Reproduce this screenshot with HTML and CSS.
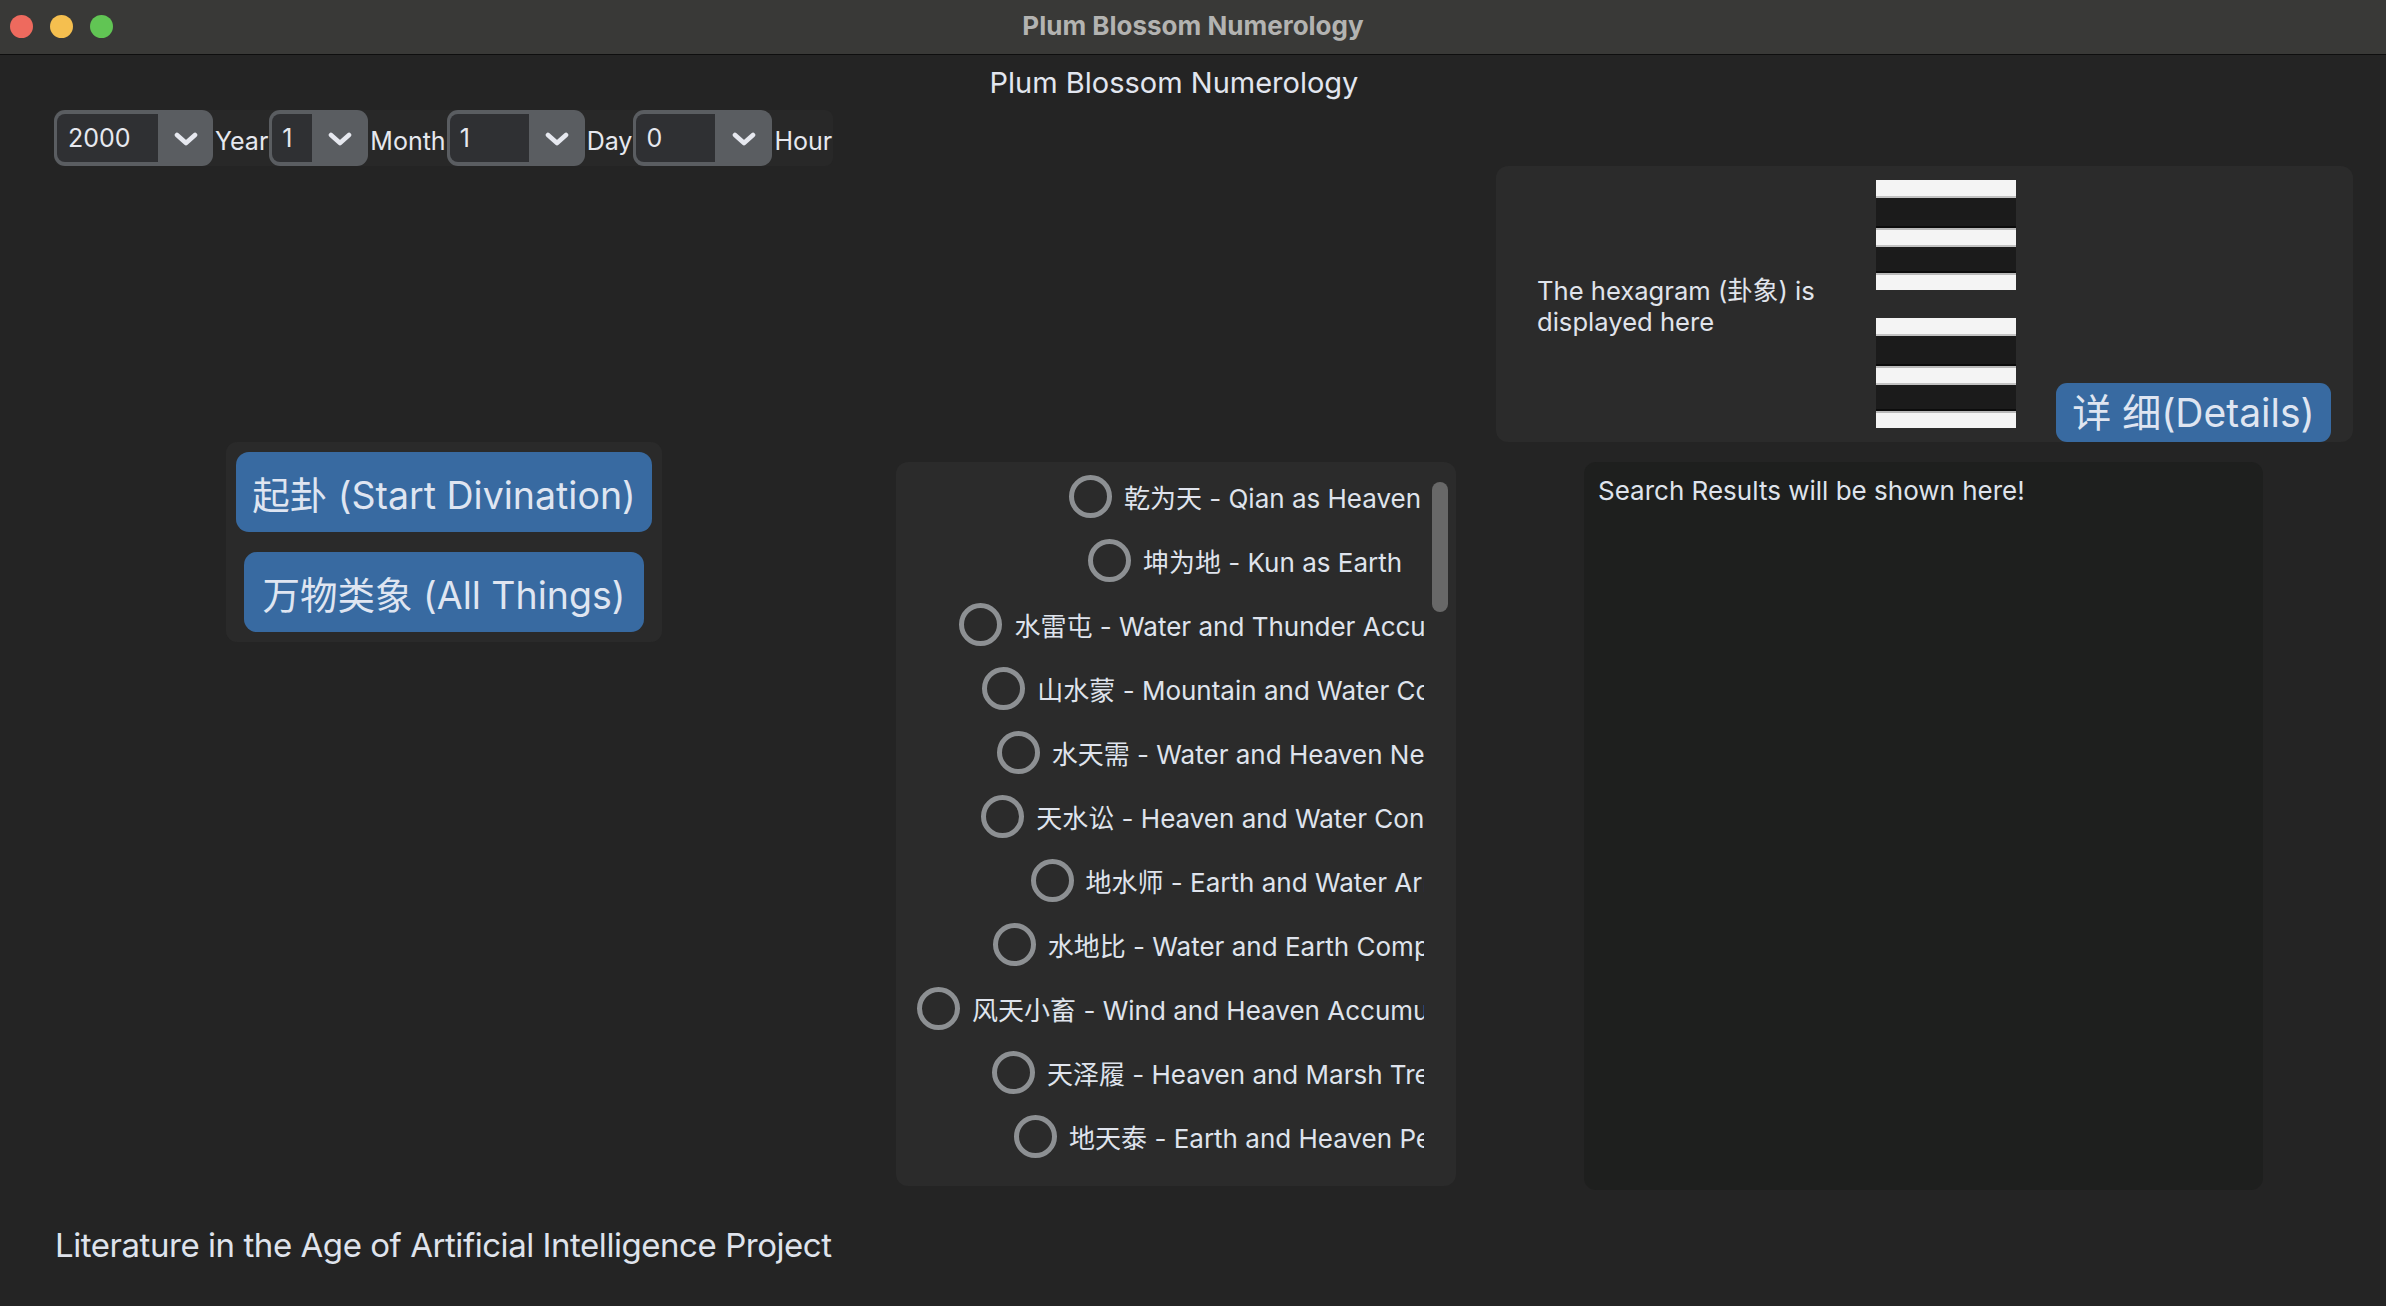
FILE: index.html
```html
<!DOCTYPE html>
<html lang="en">
<head>
<meta charset="utf-8">
<title>Plum Blossom Numerology</title>
<link rel="stylesheet" href="styles.css">
</head>
<body>
<div class="window">
  <div class="titlebar">
    <div class="lights">
      <span class="light red"></span>
      <span class="light yellow"></span>
      <span class="light green"></span>
    </div>
    <div class="wintitle">Plum Blossom Numerology</div>
  </div>
  <div class="app">
    <div class="heading">Plum Blossom Numerology</div>

    <div class="datebar">
      <div class="combo combo-year"><div class="entry">2000</div><div class="arrow"><svg viewBox="0 0 24 14" width="24" height="14"><path d="M3 3 L12 11 L21 3" fill="none" stroke="#e6e8ef" stroke-width="4.6" stroke-linecap="round" stroke-linejoin="round"/></svg></div></div>
      <span class="unit">Year</span>
      <div class="combo combo-month"><div class="entry">1</div><div class="arrow"><svg viewBox="0 0 24 14" width="24" height="14"><path d="M3 3 L12 11 L21 3" fill="none" stroke="#e6e8ef" stroke-width="4.6" stroke-linecap="round" stroke-linejoin="round"/></svg></div></div>
      <span class="unit">Month</span>
      <div class="combo combo-day"><div class="entry">1</div><div class="arrow"><svg viewBox="0 0 24 14" width="24" height="14"><path d="M3 3 L12 11 L21 3" fill="none" stroke="#e6e8ef" stroke-width="4.6" stroke-linecap="round" stroke-linejoin="round"/></svg></div></div>
      <span class="unit">Day</span>
      <div class="combo combo-hour"><div class="entry">0</div><div class="arrow"><svg viewBox="0 0 24 14" width="24" height="14"><path d="M3 3 L12 11 L21 3" fill="none" stroke="#e6e8ef" stroke-width="4.6" stroke-linecap="round" stroke-linejoin="round"/></svg></div></div>
      <span class="unit">Hour</span>
    </div>

    <div class="hexpanel">
      <div class="hextext">The hexagram (卦象) is<br>displayed here</div>
      <div class="hexcol">
        <div class="trigram">
          <div class="yang first"></div><div class="gap"></div>
          <div class="yang"></div><div class="gap short"></div>
          <div class="yang last"></div>
        </div>
        <div class="trigram">
          <div class="yang first"></div><div class="gap"></div>
          <div class="yang"></div><div class="gap short"></div>
          <div class="yang last"></div>
        </div>
      </div>
      <button class="btn details">详 细(Details)</button>
    </div>

    <div class="actions">
      <button class="btn big start">起卦 (Start Divination)</button>
      <button class="btn big all">万物类象 (All Things)</button>
    </div>

    <div class="listpanel">
      <div class="viewport">
        <div class="items">
          <label class="item"><span class="radio"></span><span class="itext">乾为天 - Qian as Heaven</span></label>
          <label class="item"><span class="radio"></span><span class="itext">坤为地 - Kun as Earth</span></label>
          <label class="item"><span class="radio"></span><span class="itext">水雷屯 - Water and Thunder Accumulation</span></label>
          <label class="item"><span class="radio"></span><span class="itext">山水蒙 - Mountain and Water Covering</span></label>
          <label class="item"><span class="radio"></span><span class="itext">水天需 - Water and Heaven Needing</span></label>
          <label class="item"><span class="radio"></span><span class="itext">天水讼 - Heaven and Water Contention</span></label>
          <label class="item"><span class="radio"></span><span class="itext">地水师 - Earth and Water Army</span></label>
          <label class="item"><span class="radio"></span><span class="itext">水地比 - Water and Earth Companion</span></label>
          <label class="item"><span class="radio"></span><span class="itext">风天小畜 - Wind and Heaven Accumulation Minor</span></label>
          <label class="item"><span class="radio"></span><span class="itext">天泽履 - Heaven and Marsh Treading</span></label>
          <label class="item"><span class="radio"></span><span class="itext">地天泰 - Earth and Heaven Peace</span></label>
          <label class="item"><span class="radio"></span><span class="itext">天地否 - Heaven and Earth Stagnation</span></label>
        </div>
      </div>
      <div class="scrollbar"><div class="thumb"></div></div>
    </div>

    <div class="results">Search Results will be shown here!</div>

    <div class="footer">Literature in the Age of Artificial Intelligence Project</div>
  </div>
</div>
</body>
</html>
```

FILE: styles.css
```css
* { box-sizing: border-box; }
html, body { margin: 0; padding: 0; }
body {
  width: 2386px;
  height: 1306px;
  overflow: hidden;
  background: #242424;
  font-family: Inter, "Noto Sans CJK SC", sans-serif;
  color: #dfe3ec;
}
.window { width: 2386px; height: 1306px; display: flex; flex-direction: column; }

.titlebar {
  height: 55px;
  flex: 0 0 55px;
  background: #393937;
  border-bottom: 1px solid #0e0e0e;
  display: flex;
  align-items: center;
  justify-content: center;
  position: relative;
}
.lights {
  position: absolute;
  left: 10px;
  top: 15px;
  display: flex;
  gap: 17px;
}
.light { width: 23px; height: 23px; border-radius: 50%; display: block; }
.red { background: #ee6a5e; }
.yellow { background: #f5bf4f; }
.green { background: #61c554; }
.wintitle {
  font-weight: 700;
  font-size: 26px;
  color: #b3b3b1;
  margin-top: -3px;
}

.app {
  flex: 1;
  display: grid;
  grid-template-columns: 896px 560px 1fr;
  grid-template-rows: 55px 56px 276px 748px 1fr;
}

.heading {
  grid-column: 1 / 4;
  grid-row: 1;
  text-align: center;
  padding-right: 38px;
  font-size: 29px;
  line-height: 55px;
  color: #e2e6ef;
}

.datebar {
  grid-column: 1;
  grid-row: 2;
  justify-self: start;
  margin-left: 54px;
  height: 56px;
  display: flex;
  align-items: center;
  background: #282828;
  border-radius: 8px;
}
.combo {
  height: 56px;
  display: flex;
  background: #5a5d61;
  border-radius: 11px;
  padding: 4px 0 4px 3px;
}
.entry {
  background: #2f3033;
  border-radius: 8px 0 0 8px;
  height: 48px;
  font-size: 25px;
  line-height: 48px;
  padding-left: 11px;
  color: #e6e8ef;
}
.arrow {
  display: flex;
  align-items: center;
  justify-content: center;
  padding-top: 2px;
}
.combo-year .entry { width: 101px; }
.combo-year .arrow { width: 55px; }
.combo-month .entry { width: 40px; padding-left: 10px; }
.combo-month .arrow { width: 56px; }
.combo-day .entry { width: 79px; padding-left: 10px; }
.combo-day .arrow { width: 56px; }
.combo-hour .entry { width: 79px; padding-left: 10px; }
.combo-hour .arrow { width: 57px; }
.unit {
  font-size: 25px;
  padding: 6px 1px 0 2px;
  color: #e6e8ef;
}

.hexpanel {
  grid-column: 3;
  grid-row: 3;
  margin-left: 40px;
  width: 857px;
  height: 276px;
  background: #2b2b2b;
  border-radius: 12px;
  display: flex;
  overflow: hidden;
}
.hextext {
  width: 380px;
  padding-left: 41px;
  align-self: center;
  font-size: 25.6px;
  line-height: 31px;
  padding-top: 4px;
  color: #e0e4ec;
}
.hexcol {
  display: flex;
  flex-direction: column;
  gap: 28px;
  padding-top: 14px;
}
.trigram { width: 140px; height: 110px; display: flex; flex-direction: column; }
.yang {
  height: 19px;
  background: #f4f4f4;
  border-top: 2px solid #b9b9b9;
  border-bottom: 2px solid #c2c2c2;
}
.yang.first { height: 18px; border-top: 0; }
.yang.last { height: 17px; border-bottom: 0; }
.gap {
  height: 30px;
  background: #1b1b1b;
  border-bottom: 2px solid #0c0c0c;
}
.gap.short { height: 26px; }

.btn {
  font-family: Inter, "Noto Sans CJK SC", sans-serif;
  background: #386aa1;
  color: #dfe5f1;
  border: 0;
  margin: 0;
  white-space: nowrap;
}
.details {
  align-self: flex-end;
  margin-left: 40px;
  width: 275px;
  height: 59px;
  border-radius: 11px;
  font-size: 39px;
  padding: 0;
  line-height: 59px;
}

.actions {
  grid-column: 1;
  grid-row: 4;
  align-self: start;
  justify-self: start;
  margin-left: 226px;
  width: 436px;
  height: 200px;
  background: #2a2a2a;
  border-radius: 11px;
  display: flex;
  flex-direction: column;
  align-items: center;
  padding: 10px 0;
  gap: 20px;
}
.big {
  height: 80px;
  border-radius: 13px;
  font-size: 37.5px;
  padding: 0;
}
.start { width: 416px; }
.all { width: 400px; }

.listpanel {
  grid-column: 2;
  grid-row: 4;
  align-self: start;
  margin-top: 20px;
  width: 560px;
  height: 724px;
  background: #2b2b2b;
  border-radius: 12px;
  display: flex;
}
.viewport {
  width: 528px;
  height: 710px;
  overflow: hidden;
  padding-top: 2px;
}
.items {
  width: 698px;
  display: flex;
  flex-direction: column;
  align-items: center;
}
.item {
  height: 64px;
  display: flex;
  align-items: center;
  gap: 12px;
  white-space: nowrap;
}
.radio {
  width: 43px;
  height: 43px;
  flex: 0 0 43px;
  border: 5px solid #8d9093;
  border-radius: 50%;
  display: block;
}
.itext {
  font-size: 26px;
  color: #dfe3ec;
}
.scrollbar {
  margin-left: 8px;
  padding-top: 20px;
  width: 16px;
}
.thumb {
  width: 16px;
  height: 130px;
  background: #686868;
  border-radius: 8px;
}

.results {
  grid-column: 3;
  grid-row: 4;
  align-self: start;
  margin-top: 20px;
  margin-left: 128px;
  width: 679px;
  height: 728px;
  background: #1e1f1e;
  border-radius: 12px;
  padding: 13px 14px;
  font-size: 26px;
  line-height: 32px;
  color: #dfe3ec;
}

.footer {
  grid-column: 1 / 4;
  grid-row: 5;
  padding-left: 55px;
  margin-top: 35px;
  font-size: 33px;
  letter-spacing: -0.45px;
  line-height: 40px;
  color: #dfe3ec;
}
```
